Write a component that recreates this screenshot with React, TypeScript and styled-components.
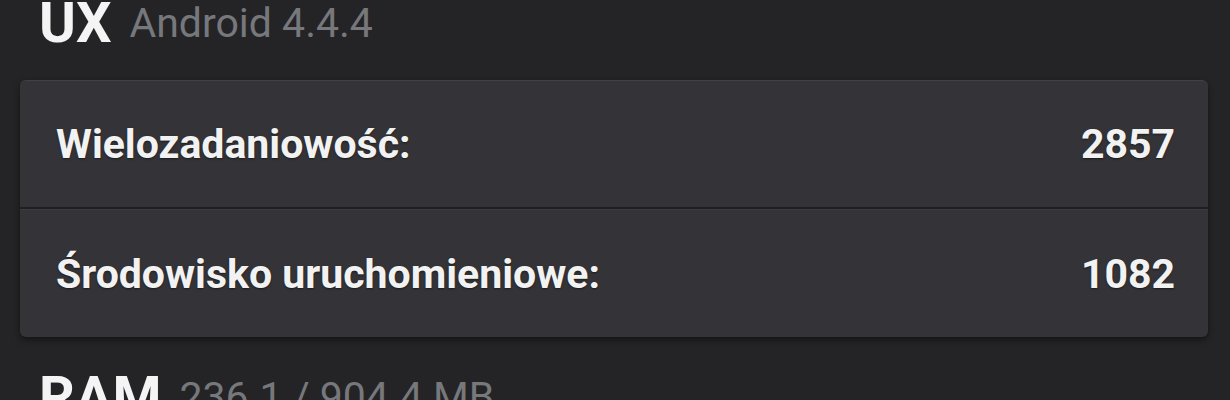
import React from 'react';
import styled, { createGlobalStyle } from 'styled-components';

const GlobalStyle = createGlobalStyle`
  html, body {
    margin: 0;
    padding: 0;
    background: #242427;
    overflow: hidden;
  }
  body {
    font-family: Roboto, 'Noto Sans', 'Liberation Sans', sans-serif;
  }
`;

const Screen = styled.div`
  width: 1230px;
  height: 400px;
  background: #242427;
  overflow: hidden;
`;

const Section = styled.section`
  display: flex;
  flex-direction: column;
  margin-bottom: 37px;
`;

// heading row: big white title + grey detail
const SectionHeader = styled.header`
  height: 46px;
  display: flex;
  align-items: center;
  gap: 18px;
  padding: 0 38px 0 39px;
  margin-bottom: 34px;
  white-space: nowrap;
`;

const Title = styled.h2`
  margin: 0;
  font-size: 56px;
  line-height: 1;
  font-weight: 700;
  color: #f4f4f4;
`;

const Detail = styled.span`
  font-size: 41px;
  line-height: 1;
  font-weight: 400;
  color: #77787b;
`;

const Card = styled.div`
  margin: 0 22px 0 20px;
  background: #343438;
  border-radius: 6px;
  border-top: 1px solid #404145;
  box-shadow: 0 3px 6px rgba(0, 0, 0, 0.45);
  overflow: hidden;
`;

const Row = styled.div<{ last?: boolean }>`
  height: ${({ last }) => (last ? 127 : 126)}px;
  display: flex;
  align-items: center;
  justify-content: space-between;
  padding: 0 33px 0 36px;
  border-bottom: ${({ last }) => (last ? 'none' : '2px solid #1f1f22')};
  & + & {
    border-top: 1px solid #3b3c40;
  }
`;

const Label = styled.span`
  font-size: 41px;
  font-weight: 700;
  color: #f2f2f2;
  text-shadow: 0 1px 2px rgba(0, 0, 0, 0.5);
`;

const Value = styled(Label)``;

const uxScores = [
  { name: 'Wielozadaniowość:', score: 2857 },
  { name: 'Środowisko uruchomieniowe:', score: 1082 },
];

const App: React.FC = () => {
  return (
    <Screen>
      <GlobalStyle />
      <Section>
        <SectionHeader>
          <Title>UX</Title>
          <Detail>Android 4.4.4</Detail>
        </SectionHeader>
        <Card>
          {uxScores.map((s, i) => (
            <Row key={s.name} last={i === uxScores.length - 1}>
              <Label>{s.name}</Label>
              <Value>{s.score}</Value>
            </Row>
          ))}
        </Card>
      </Section>
      <Section>
        <SectionHeader>
          <Title>RAM</Title>
          <Detail>236.1 / 904.4 MB</Detail>
        </SectionHeader>
      </Section>
    </Screen>
  );
};

export default App;
